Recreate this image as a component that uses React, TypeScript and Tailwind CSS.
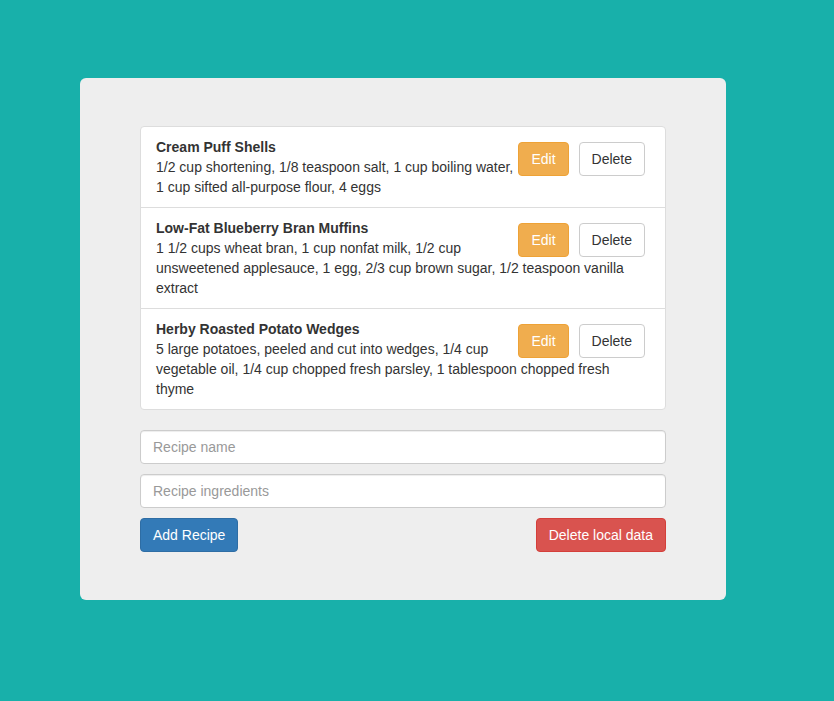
import { useState } from 'react';

interface Recipe {
  name: string;
  ingredients: string;
}

const initialRecipes: Recipe[] = [
  {
    name: 'Cream Puff Shells',
    ingredients: '1/2 cup shortening, 1/8 teaspoon salt, 1 cup boiling water, 1 cup sifted all-purpose flour, 4 eggs',
  },
  {
    name: 'Low-Fat Blueberry Bran Muffins',
    ingredients:
      '1 1/2 cups wheat bran, 1 cup nonfat milk, 1/2 cup unsweetened applesauce, 1 egg, 2/3 cup brown sugar, 1/2 teaspoon vanilla extract',
  },
  {
    name: 'Herby Roasted Potato Wedges',
    ingredients:
      '5 large potatoes, peeled and cut into wedges, 1/4 cup vegetable oil, 1/4 cup chopped fresh parsley, 1 tablespoon chopped fresh thyme',
  },
];

export default function App() {
  const [recipes, setRecipes] = useState<Recipe[]>(initialRecipes);
  const [name, setName] = useState('');
  const [ingredients, setIngredients] = useState('');

  const addRecipe = () => {
    if (!name.trim()) return;
    setRecipes([...recipes, { name, ingredients }]);
    setName('');
    setIngredients('');
  };

  return (
    <div
      className="min-h-screen bg-[#18b0aa] pt-[78px] pl-[80px] text-[14px] leading-[20px] text-[#333]"
      style={{ fontFamily: '"Liberation Sans", Arial, sans-serif' }}
    >
      <div className="w-[646px] rounded-[6px] bg-[#eeeeee] px-[60px] pt-[48px] pb-[48px]">
        {/* Recipe list */}
        <ul>
          {recipes.map((r, i) => (
            <li
              key={i}
              className={`border border-[#ddd] bg-white px-[15px] py-[10px] ${i > 0 ? '-mt-px' : 'rounded-t-[4px]'} ${
                i === recipes.length - 1 ? 'rounded-b-[4px]' : ''
              }`}
            >
              <div className="float-right mt-[5px] mr-[5px] ml-[5px] flex gap-[10px]">
                <button className="h-[34px] rounded-[4px] border border-[#eea236] bg-[#f0ad4e] px-[12px] text-white">
                  Edit
                </button>
                <button
                  onClick={() => setRecipes(recipes.filter((_, j) => j !== i))}
                  className="h-[34px] rounded-[4px] border border-[#ccc] bg-white px-[12px] text-[#333]"
                >
                  Delete
                </button>
              </div>
              <div className="font-bold">{r.name}</div>
              <div>{r.ingredients}</div>
            </li>
          ))}
        </ul>

        {/* Add form */}
        <div className="mt-[20px] flex flex-col gap-[10px]">
          <input
            value={name}
            onChange={e => setName(e.target.value)}
            placeholder="Recipe name"
            className="h-[34px] w-full rounded-[4px] border border-[#ccc] bg-white px-[12px] shadow-[inset_0_1px_1px_rgba(0,0,0,0.075)] outline-none placeholder:text-[#999]"
          />
          <input
            value={ingredients}
            onChange={e => setIngredients(e.target.value)}
            placeholder="Recipe ingredients"
            className="h-[34px] w-full rounded-[4px] border border-[#ccc] bg-white px-[12px] shadow-[inset_0_1px_1px_rgba(0,0,0,0.075)] outline-none placeholder:text-[#999]"
          />
          <div className="flex justify-between">
            <button
              onClick={addRecipe}
              className="h-[34px] rounded-[4px] border border-[#2e6da4] bg-[#337ab7] px-[12px] text-white"
            >
              Add Recipe
            </button>
            <button
              onClick={() => setRecipes([])}
              className="h-[34px] rounded-[4px] border border-[#d43f3a] bg-[#d9534f] px-[12px] text-white"
            >
              Delete local data
            </button>
          </div>
        </div>
      </div>
    </div>
  );
}
